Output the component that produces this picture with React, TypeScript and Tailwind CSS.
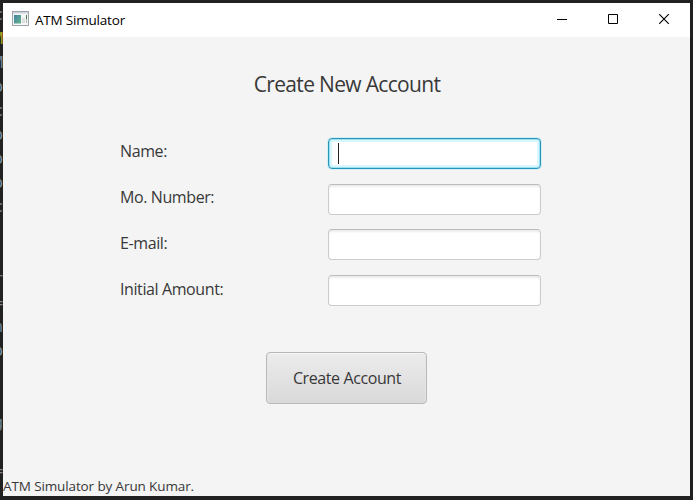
const editorEdge = [
  { ch: "c", tone: "text-[#8295a3]" },
  { ch: "M", tone: "text-[#a9a51d]" },
  { ch: "M", tone: "text-[#6f8597]" },
  { ch: "o", tone: "text-[#7f95a5]" },
  { ch: "c", tone: "text-[#8295a3]" },
  { ch: "o", tone: "text-[#7f95a5]" },
  { ch: "o", tone: "text-[#7f95a5]" },
  { ch: "o", tone: "text-[#7f95a5]" },
  { ch: "c", tone: "text-[#8295a3]" },
  { ch: "", tone: "" },
  { ch: "", tone: "" },
  { ch: "r", tone: "text-[#77777f]" },
  { ch: "=", tone: "text-[#85858c]" },
  { ch: "n", tone: "text-[#6f8597]" },
  { ch: "o", tone: "text-[#7f95a5]" },
  { ch: "", tone: "" },
  { ch: "", tone: "" },
  { ch: "g", tone: "text-[#6f8597]" },
  { ch: "", tone: "" },
  { ch: "=", tone: "text-[#85858c]" },
];

const fields = [
  { label: "Name:", focused: true, offset: "" },
  { label: "Mo. Number:", focused: false, offset: "" },
  { label: "E-mail:", focused: false, offset: "-mt-px" },
  { label: "Initial Amount:", focused: false, offset: "-mt-px" },
];

function AppIcon() {
  return (
    <svg width="18" height="16" viewBox="0 0 18 16" className="mb-[2px] shrink-0">
      <defs>
        <linearGradient id="pane" x1="0" y1="0" x2="1" y2="1">
          <stop offset="0" stopColor="#4580a5" />
          <stop offset="1" stopColor="#65b489" />
        </linearGradient>
      </defs>
      <rect x="0.5" y="0.5" width="16" height="14" fill="#f5f7f7" stroke="#9da3aa" />
      <rect x="1" y="1" width="15" height="1.5" fill="#cdd3db" />
      <rect x="2" y="4" width="7" height="8.5" fill="url(#pane)" />
      <rect x="10" y="7" width="3" height="5" fill="#dce1df" />
      <rect x="14" y="4" width="1" height="4" fill="#467750" />
      <rect x="14" y="8" width="1" height="4" fill="#b4bab7" />
    </svg>
  );
}

function TitleBar() {
  return (
    <header className="flex h-[34px] shrink-0 items-center bg-white pl-[9px]">
      <AppIcon />
      <span className="ml-[5px] text-[13.5px] leading-[20px] tracking-[-0.2px] text-black">ATM Simulator</span>
      <div className="ml-auto flex h-full">
        {["minimize", "maximize", "close"].map((kind) => (
          <button key={kind} aria-label={kind} className="flex h-full w-[51px] items-center justify-center">
            <svg width="11" height="11" viewBox="0 0 11 11" fill="none" stroke="#000" className="mb-[2px]">
              {kind === "minimize" && <path d="M0 5.5H10" />}
              {kind === "maximize" && <path d="M0.5 0.5H9.5V9.5H0.5Z" />}
              {kind === "close" && <path d="M0.2 0.2L9.8 9.8M9.8 0.2L0.2 9.8" strokeWidth="1.15" />}
            </svg>
          </button>
        ))}
      </div>
    </header>
  );
}

export default function App() {
  return (
    <div className="flex h-[500px] w-[693px] overflow-hidden bg-[#222122] font-['Open_Sans','Noto_Sans',sans-serif] text-[#383838]">
      <div className="flex w-[3px] shrink-0 flex-col overflow-hidden pt-[3px] font-['DejaVu_Sans_Mono',monospace] text-[15px]">
        {editorEdge.map((row, i) => (
          <div key={i} className={`flex h-6 shrink-0 items-center justify-end leading-6 ${row.tone}`}>
            {row.ch}
          </div>
        ))}
      </div>
      <main className="mt-[3px] flex h-[493px] w-[687px] flex-col bg-[#f4f4f4]">
        <TitleBar />
        <h1 className="mt-[32px] pl-px text-center text-[21px] leading-[30px] tracking-[-0.68px]">Create New Account</h1>
        <form className="mt-[39px] flex flex-col gap-[15px] pl-[117px]">
          {fields.map((f) => (
            <div key={f.label} className="flex h-[31px] items-start">
              <label className="mt-px w-[208px] text-[16px] leading-[24px] tracking-[-0.4px]">{f.label}</label>
              <div
                className={
                  f.focused
                    ? "flex h-[31px] w-[213px] items-center rounded-[4px] border border-[#2796ba] bg-white pl-[9px] shadow-[0_0_0_1px_#d3eff6,inset_0_0_0_1px_#9fe0f0,inset_0_0_0_3px_#d8f7ff]"
                    : `h-[31px] w-[213px] rounded-[4px] border border-[#cccccc] border-t-[#bcbcbc] bg-white shadow-[inset_0_2px_2px_#ececec] ${f.offset}`
                }
              >
                {f.focused && <span className="h-[21px] w-px bg-[#222]" />}
              </div>
            </div>
          ))}
        </form>
        <button
          type="button"
          className="mt-[45px] ml-[263px] h-[52px] w-[161px] rounded-[4px] border border-[#b8b8b8] bg-linear-to-b from-[#ececec] to-[#d9d9d9] pl-px text-[16px] leading-[24px] tracking-[-0.4px] shadow-[inset_0_1px_0_#f5f5f5,inset_1px_0_0_#e6e6e6,inset_-1px_0_0_#e6e6e6]"
        >
          Create Account
        </button>
        <footer className="mt-auto text-[13.5px] leading-[20px] tracking-[-0.12px]">ATM Simulator by Arun Kumar.</footer>
      </main>
    </div>
  );
}
